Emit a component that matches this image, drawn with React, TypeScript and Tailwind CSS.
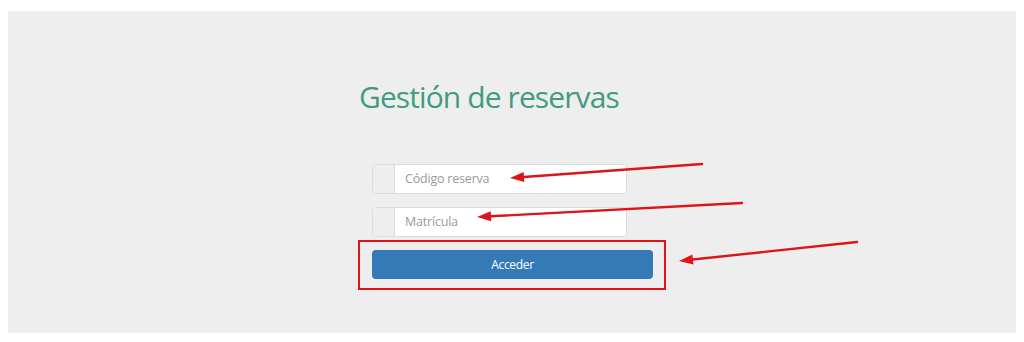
import React from "react";

function Arrow({ x1, y1, x2, y2 }: { x1: number; y1: number; x2: number; y2: number }) {
  // tail (x1,y1) -> tip (x2,y2)
  const dx = x2 - x1;
  const dy = y2 - y1;
  const len = Math.hypot(dx, dy);
  const ux = dx / len;
  const uy = dy / len;
  const headL = 14;
  const headW = 5;
  const bx = x2 - ux * headL;
  const by = y2 - uy * headL;
  const pts = `${x2},${y2} ${bx - uy * headW},${by + ux * headW} ${bx + uy * headW},${by - ux * headW}`;
  return (
    <g>
      <line x1={x1} y1={y1} x2={bx} y2={by} stroke="#dd1418" strokeWidth={2.4} strokeLinecap="round" />
      <polygon points={pts} fill="#dd1418" />
    </g>
  );
}

function Field({ placeholder }: { placeholder: string }) {
  return (
    <div className="flex h-[30px] w-[255px] rounded-[4px] border border-[#dcdcdc] bg-white overflow-hidden">
      <div className="w-[22px] bg-[#eeeeee] border-r border-[#dcdcdc]" />
      <input
        className="flex-1 px-[10px] text-[12.5px] tracking-[-0.2px] text-[#555] placeholder:text-[#9a9a9a] outline-none bg-white"
        placeholder={placeholder}
      />
    </div>
  );
}

export default function App() {
  return (
    <div className="relative w-[1024px] h-[342px] bg-white pt-[11px]" style={{ fontFamily: '"Open Sans", "DejaVu Sans", sans-serif' }}>
      <div className="mx-[8px] h-[322px] bg-[#eeeeee] pl-[351px] pt-[66px]">
        <h1 className="text-[30px] leading-[40px] text-[#3f9c80] tracking-[-0.9px]">Gestión de reservas</h1>
        <div className="mt-[47px] pl-[13px] flex flex-col">
          <Field placeholder="Código reserva" />
          <div className="h-[13px]" />
          <Field placeholder="Matrícula" />
          <button className="mt-[13px] h-[29px] w-[281px] rounded-[4px] bg-[#337ab7] text-white text-[12px] tracking-[-0.3px]">
            Acceder
          </button>
        </div>
      </div>

      <div className="absolute left-[358px] top-[240px] w-[308px] h-[50px] border-[2.5px] border-[#dd1418]" />

      <svg className="absolute left-0 top-0" width={1024} height={342}>
        <Arrow x1={702} y1={164} x2={510} y2={178} />
        <Arrow x1={742} y1={203} x2={477} y2={217} />
        <Arrow x1={857} y1={242} x2={679} y2={261} />
      </svg>
    </div>
  );
}
